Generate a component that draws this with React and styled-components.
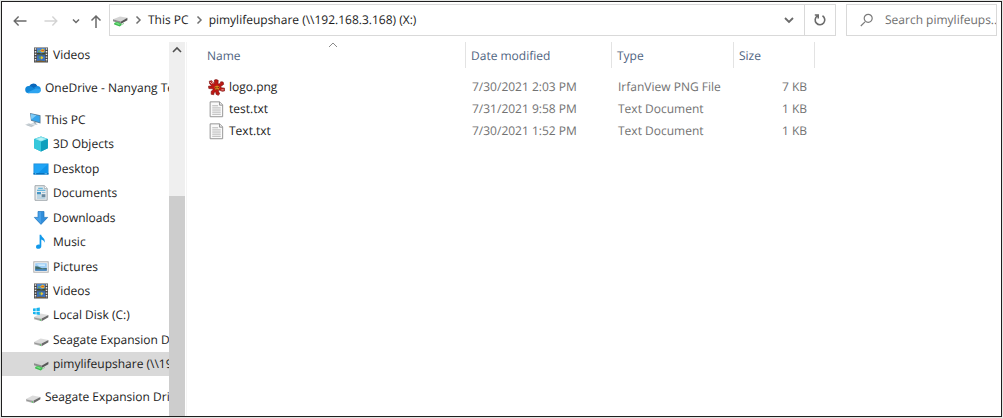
import React from "react";
import styled, { createGlobalStyle, css } from "styled-components";

const GlobalStyle = createGlobalStyle`
  *, *::before, *::after { box-sizing: border-box; }
  html { background: #e4e6e4; }
  body {
    margin: 0;
    padding: 1px;
    font-family: "Open Sans", "Noto Sans", sans-serif;
    font-size: 12px;
    line-height: 16px;
    color: #1c1c1c;
    text-rendering: geometricPrecision;
  }
  button, input, table { font: inherit; color: inherit; text-rendering: inherit; }
  svg { display: block; flex: none; }
`;

const Window = styled.div`
  display: flex;
  flex-direction: column;
  min-height: calc(100vh - 2px);
  border: 1px solid #1f1f1f;
  background: #fff;
`;

const Toolbar = styled.header`
  display: flex;
  align-items: stretch;
  height: 40px;
  padding: 2px 4px 6px 0;
`;

const plainButton = css`
  display: flex;
  align-items: center;
  justify-content: center;
  padding: 0;
  border: 0;
  background: none;
  white-space: nowrap;
`;

const History = styled.div`
  display: flex;
  width: 107px;
  padding-left: 3px;
`;

const NavButton = styled.button`
  ${plainButton}
  width: ${(p) => p.$width}px;
  padding-top: 2px;
  color: ${(p) => (p.disabled ? "#d3d3d3" : "#6a6a6a")};
`;

const AddressBar = styled.nav`
  display: flex;
  flex: 1;
  min-width: 0;
  border: 1px solid #d9d9d9;
`;

const Crumbs = styled.ol`
  display: flex;
  flex: 1;
  align-items: center;
  min-width: 0;
  margin: 0;
  padding: 0 0 0 2px;
  overflow: hidden;
  list-style: none;
`;

const Crumb = styled.li`
  display: flex;
  align-items: center;
`;

const CrumbButton = styled.button`
  ${plainButton}
`;

const CrumbArrow = styled.span`
  display: flex;
  justify-content: center;
  width: 20px;
  color: #707070;
`;

const BarButton = styled.button`
  ${plainButton}
  width: 31px;
  color: #6a6a6a;
  border-left: ${(p) => (p.$divided ? "1px solid #d9d9d9" : "0")};
`;

const SearchBox = styled.label`
  display: flex;
  align-items: center;
  gap: 12px;
  width: 151px;
  margin-left: 10px;
  padding-left: 13px;
  border: 1px solid #d9d9d9;
  color: #7b7b7b;
`;

const SearchInput = styled.input`
  flex: 1;
  min-width: 0;
  padding: 0;
  border: 0;
  outline: 0;
  background: none;
  &::placeholder { color: #6f6f6f; opacity: 1; }
`;

const Body = styled.div`
  display: flex;
  flex: 1;
`;

const Sidebar = styled.nav`
  display: flex;
  flex-direction: column;
  gap: 8px;
  width: 167px;
  padding: 1px 0 7px;
  overflow: hidden;
`;

const Group = styled.ul`
  display: flex;
  flex-direction: column;
  flex: ${(p) => p.$rows} 0 auto;
  margin: 0;
  padding: 0;
  list-style: none;
`;

const TreeItem = styled.li`
  display: flex;
  flex: 1 0 24px;
`;

const TreeLink = styled.a`
  display: flex;
  flex: 1;
  align-items: center;
  gap: 4px;
  min-width: 0;
  padding-left: ${(p) => (p.$nested ? 31 : 23)}px;
  overflow: hidden;
  background: ${(p) => (p.$selected ? "#d9d9d9" : "none")};
  color: inherit;
  text-decoration: none;
  white-space: nowrap;
`;

const ScrollTrack = styled.div`
  display: flex;
  flex-direction: column;
  width: 16px;
  background: #efefef;
`;

const ScrollButton = styled.button`
  ${plainButton}
  height: 16px;
  color: #505050;
`;

const ScrollThumb = styled.div`
  flex: 1;
  margin-top: 138px;
  background: #cdcdcd;
`;

const Main = styled.main`
  flex: 1;
  min-width: 0;
  margin-left: 1px;
  border-left: 1px solid #f4f4f4;
`;

const FileTable = styled.table`
  width: 100%;
  table-layout: fixed;
  border-collapse: separate;
  border-spacing: 0;
`;

const Column = styled.col`
  width: ${(p) => (p.$width ? `${p.$width}px` : "auto")};
`;

const HeadCell = styled.th`
  height: 26px;
  padding: 0 0 0 ${(p) => (p.$first ? 20 : 5)}px;
  border-right: ${(p) => (p.$last ? "0" : "1px solid #e3e3e3")};
  font-weight: 400;
  text-align: left;
`;

const SortButton = styled.button`
  ${plainButton}
  position: relative;
  justify-content: flex-start;
  width: 100%;
  height: 26px;
  padding-top: 2px;
  color: #4f647f;
`;

const SortMark = styled.span`
  position: absolute;
  top: 0;
  left: 121px;
  color: #8a8a8a;
`;

const Cell = styled.td`
  height: 22px;
  padding: 0 ${(p) => (p.$right ? 8 : 0)}px 0 6px;
  color: #727272;
  text-align: ${(p) => (p.$right ? "right" : "left")};
  white-space: nowrap;
`;

const NameCell = styled(Cell)`
  padding-left: 21px;
  color: #1c1c1c;
`;

const Rows = styled.tbody`
  tr:first-child > td {
    height: 30px;
    padding-top: 8px;
  }
`;

const FileName = styled.span`
  display: flex;
  align-items: center;
  gap: 4px;
  height: 22px;
`;

const Line = ({ d, w = 16, h = 16, sw = 1.5 }) => (
  <svg width={w} height={h} viewBox={`0 0 ${w} ${h}`} fill="none" stroke="currentColor" strokeWidth={sw} aria-hidden="true">
    <path d={d} />
  </svg>
);

const Icon = ({ children, size = 16 }) => (
  <svg width={size} height={size} viewBox="0 0 16 16" aria-hidden="true">{children}</svg>
);

const DriveShape = () => (
  <>
    <path d="M1 10 7.6 6.6 15.4 7.9 8.6 11.6Z" fill="#dcdcdc" />
    <path d="M1 10 8.6 11.6V14.2L1 12.2Z" fill="#b4b4b4" />
    <path d="M8.6 11.6 15.4 7.9V10.3L8.6 14.2Z" fill="#6a6a6a" />
    <path d="M2 11.1 7.8 12.4V13L2 11.7Z" fill="#8d8d8d" />
    <circle cx="7.4" cy="13" r="0.7" fill="#4fd05b" />
  </>
);

const DriveIcon = () => (
  <Icon>
    <DriveShape />
  </Icon>
);

const NetDriveIcon = () => (
  <Icon>
    <path d="M1 7.3 8 4.4 15.4 5.8 9 9.4Z" fill="#d4d4d4" />
    <path d="M1 7.3 9 9.4V11.8L1 9.2Z" fill="#8d8d8d" />
    <path d="M9 9.4 15.4 5.8V8.3L9 11.8Z" fill="#565656" />
    <path d="M2.2 11 5 9.8 9.6 11.8V13L7.8 14.4 2.2 12.4Z" fill="#3dbb4f" />
    <path d="M3 11.1 5 10.5 8.2 11.9 7 12.9Z" fill="#79e084" />
    <path d="M9.6 12.6 12 11.4" stroke="#8fcf96" />
  </Icon>
);

const LocalDiskIcon = () => (
  <Icon>
    <DriveShape />
    <g fill="#18b4ee">
      <path d="M0 1.6 2.7 1.2V4H0Z" />
      <path d="M3.4 1.1 6.8.6V4H3.4Z" />
      <path d="M0 4.7H2.7V7.5L0 7.1Z" />
      <path d="M3.4 4.7H6.8V8.1L3.4 7.6Z" />
    </g>
  </Icon>
);

const VideosIcon = () => (
  <Icon>
    <rect x="1" y="0.5" width="14" height="15" fill="#4a4a4a" />
    <path d="M2.5 1.3V15M13.5 1.3V15" stroke="#ececec" strokeWidth="1.5" strokeDasharray="1.4 1.3" />
    <rect x="4" y="1" width="8" height="6.6" fill="#4b84cf" />
    <rect x="4" y="8.3" width="8" height="6.7" fill="#3a70bd" />
    <path d="M4 5.9 6 5.4 8 6.4 12 5.6V7.6H4Z" fill="#3c4a25" />
    <path d="M7 3.4 9.7 1.6 11.7 3 11 5.3 8.5 5.2Z" fill="#e8b72d" />
    <path d="M8 3.5 10.5 2.9 11.2 4H8.2Z" fill="#d34b28" />
    <path d="M5 3.5H7V4.8H5Z" fill="#79b64d" />
    <path d="M5.8 9.4H8.8V11.5H5.8Z" fill="#54a154" />
    <path d="M8.5 9 10.5 10.6 8.6 12.6 7.5 11Z" fill="#e6c33b" />
    <path d="M4 13.9 7.5 13.4 12 14.2V15H4Z" fill="#775b2c" />
  </Icon>
);

const CloudIcon = () => (
  <Icon>
    <path d="M4.3 6.1A4.5 4.5 0 0 1 12.4 6L11 9.6 4 9Z" fill="#0b67ba" />
    <path d="M3.7 13.2A3.6 3.6 0 0 1 3.9 6 4 4 0 0 1 6.4 6.6L11.2 9.4 4 13.2Z" fill="#1187d8" />
    <path d="M8.7 8.1 10.3 6.9A3.7 3.7 0 0 1 12.4 6 3.7 3.7 0 0 1 15.8 9L11.2 9.7Z" fill="#188ee0" />
    <path d="M2 12.7 10.9 8.6 15.7 9.1A3 3 0 0 1 13 13.2H3.7Z" fill="#2da4f0" />
  </Icon>
);

const ComputerIcon = () => (
  <Icon>
    <path d="M5 1 15.5 3.3V11.4L6 8.8Z" fill="#5b7f99" />
    <path d="M5.7 1.9 14.7 3.9V10.3L6.5 8.1Z" fill="#36a5ec" />
    <path d="M5.7 1.9 11.5 3.2 6.4 7.4Z" fill="#81cdf8" />
    <path d="M9 9.9 11.4 10.5 11 11.9 8.4 11.2Z" fill="#8fa1ad" />
    <path d="M7 11.2 13 11.9 11.4 13 6 12Z" fill="#c3ced5" />
    <path d="M0 12.8 4 11.2 10 13.3 6.6 15.2Z" fill="#cfd6db" />
    <path d="M1.8 12.8 6.8 14.5M3.4 12.1 8.4 13.8" stroke="#aab4bb" strokeWidth=".5" />
  </Icon>
);

const CubeIcon = () => (
  <Icon>
    <path d="M8 .5 14.8 3V12.3L8 15.5 1.2 12.3V3Z" fill="#12a6c2" />
    <path d="M8 .5 14.8 3 8 5.7 1.2 3Z" fill="#83e3ed" />
    <path d="M1.2 3 8 5.7V15.5L1.2 12.3Z" fill="#36c8dc" />
    <path d="M8 5.7 14.8 3V12.3L8 15.5Z" fill="#0e9fbd" />
    <path d="M4 3.1 8 1.7 12 3.1 8 4.7Z" fill="#baf3f6" />
  </Icon>
);

const DesktopIcon = () => (
  <Icon>
    <rect x=".5" y="2.5" width="15" height="11" fill="#1686d2" />
    <rect x="1.2" y="3.2" width="13.6" height="8.8" fill="#20a5f6" />
    <path d="M14.8 3.2V12H5.2Z" fill="#0f94e9" />
    <path d="M.5 12H15.5V13.5H.5Z" fill="#0872bc" />
    <path d="M2 12.8H3.2M11.6 12.8H14" stroke="#8cd5ff" strokeWidth=".8" />
  </Icon>
);

const DocumentsIcon = () => (
  <Icon>
    <path d="M2 .7H11.3L14.2 3.4V15.3H2Z" fill="#e6eaec" stroke="#a2a9ae" />
    <path d="M11.3.7V3.6H14.2" fill="#fff" stroke="#a2a9ae" strokeWidth=".8" />
    <path d="M5.2 3.2H9.8M4 5.2H12.4" stroke="#3fa6d8" strokeWidth="1.1" />
    <rect x="4" y="7" width="4" height="2.4" fill="#4596c6" />
    <rect x="8.6" y="9.2" width="3.8" height="3" fill="#6a8aa0" />
    <path d="M9 7.5H12.4M4 11H7.6M4 13H12.4" stroke="#8dbcd8" strokeWidth=".9" />
  </Icon>
);

const DownloadIcon = () => (
  <Icon>
    <path d="M5 1.5H11V7.4H14.7L8 14.4 1.3 7.4H5Z" fill="#318edb" stroke="#2176bb" strokeWidth=".7" />
    <path d="M5.5 2H8V13.6L2.3 7.9H5.5Z" fill="#46a0e8" />
  </Icon>
);

const MusicIcon = () => (
  <Icon>
    <path d="M6.6.8H8.2C8.4 3.6 12.6 4 11.7 8.8 11.1 6.5 9.8 6 8.3 5.4V12.2C8.3 15.3 3 15.8 3 12.9 3 10.7 5.4 10.1 6.6 10.7Z" fill="#1299ea" />
  </Icon>
);

const PicturesIcon = () => (
  <Icon>
    <rect x=".8" y="2.8" width="14.4" height="10.4" fill="#fafafa" stroke="#b0b0b0" />
    <rect x="2.2" y="4.2" width="11.6" height="7.6" fill="#9ccdf5" />
    <path d="M4 5.4H12V6.8H6Z" fill="#e0f5ff" />
    <path d="M2.2 7.2 5 7.4 9 9.2 13.8 9V10.4H2.2Z" fill="#416b68" />
    <path d="M2.2 10 9 10.4 13.8 9.9V11.8H2.2Z" fill="#3a7ab5" />
  </Icon>
);

const IrfanIcon = () => (
  <Icon size={17}>
    <path d="M6 4.8 6 1 7.6 .5 9.6 1.2 9.4 4.6 11.4 4.4 12 2.6 14.2 2.8 14.8 5 12 7 12.4 8.2 15.6 8.6 15.6 11.2 13.4 11.6 10.6 10.4 9.8 11.4 11 14 9.6 15.4 7.6 14.4 7.2 12 5.8 12.6 5.4 14.8 3 14.4 3 11.6 4.8 10 4.4 9.2 .8 9 .4 6.8 3.6 6.4 1.6 4.6 1.2 2 3.6 1.6Z" fill="#bd1814" stroke="#7d1512" strokeWidth=".6" strokeLinejoin="round" />
    <path d="M6 7.2 8.6 6.2 11 7.6 10 10 7 10.2Z" fill="#d8891c" />
    <path d="M6.8 7.8H8V8.7H6.8ZM9.1 7.5H10.2V8.4H9.1ZM7.4 9.3H9.6V9.8H7.4Z" fill="#5d2414" />
    <path d="M2 2.8 3.6 4.6M3.8 2.2 4.8 4.4M12.6 10.2H14.8" stroke="#e2b5b1" strokeWidth=".9" />
  </Icon>
);

const TextIcon = () => (
  <Icon size={17}>
    <path d="M2 .8H11L13.8 3.6V14.8H2Z" fill="#fafafa" stroke="#929292" strokeWidth=".9" />
    <path d="M10.8.8V3.9H13.8" fill="#e7e7e7" stroke="#929292" strokeWidth=".9" />
    <path d="M4 4.5H9.5M4 6.5H12M4 8.5H12M4 10.5H12M4 12.5H12" stroke="#aaa" strokeWidth=".8" />
  </Icon>
);

const GROUPS = [
  [{ label: "Videos", icon: VideosIcon, nested: true }],
  [{ label: "OneDrive - Nanyang Technological University", icon: CloudIcon }],
  [
    { label: "This PC", icon: ComputerIcon },
    { label: "3D Objects", icon: CubeIcon, nested: true },
    { label: "Desktop", icon: DesktopIcon, nested: true },
    { label: "Documents", icon: DocumentsIcon, nested: true },
    { label: "Downloads", icon: DownloadIcon, nested: true },
    { label: "Music", icon: MusicIcon, nested: true },
    { label: "Pictures", icon: PicturesIcon, nested: true },
    { label: "Videos", icon: VideosIcon, nested: true },
    { label: "Local Disk (C:)", icon: LocalDiskIcon, nested: true },
    { label: "Seagate Expansion Drive", icon: DriveIcon, nested: true },
    { label: "pimylifeupshare (\\\\192.168.3.168)", icon: NetDriveIcon, nested: true, selected: true },
  ],
  [{ label: "Seagate Expansion Drive", icon: DriveIcon }],
];

const FILES = [
  { name: "logo.png", icon: IrfanIcon, date: "7/30/2021 2:03 PM", type: "IrfanView PNG File", size: "7 KB" },
  { name: "test.txt", icon: TextIcon, date: "7/31/2021 9:58 PM", type: "Text Document", size: "1 KB" },
  { name: "Text.txt", icon: TextIcon, date: "7/30/2021 1:52 PM", type: "Text Document", size: "1 KB" },
];

export default function App() {
  return (
    <>
      <GlobalStyle />
      <Window>
        <Toolbar>
          <History>
            <NavButton $width={29} aria-label="Back"><Line d="M14.5 8H2M6.6 3.6 2.2 8 6.6 12.4" sw={1.4} /></NavButton>
            <NavButton $width={34} disabled aria-label="Forward"><Line d="M1.5 8H14M9.4 3.6 13.8 8 9.4 12.4" sw={1.4} /></NavButton>
            <NavButton $width={15} aria-label="Recent locations"><Line w={8} h={8} d="M1 2.5 4 5.5 7 2.5" /></NavButton>
            <NavButton $width={26} aria-label="Up"><Line d="M8 15V3M3.5 7.5 8 3 12.5 7.5" /></NavButton>
          </History>
          <AddressBar aria-label="Address">
            <Crumbs>
              <Crumb><NetDriveIcon /></Crumb>
              <Crumb>
                <CrumbArrow><Line w={8} h={8} d="M2.5 .5 6 4 2.5 7.5" /></CrumbArrow>
                <CrumbButton>This PC</CrumbButton>
              </Crumb>
              <Crumb>
                <CrumbArrow><Line w={8} h={8} d="M2.5 .5 6 4 2.5 7.5" /></CrumbArrow>
                <CrumbButton>{"pimylifeupshare (\\\\192.168.3.168) (X:)"}</CrumbButton>
              </Crumb>
            </Crumbs>
            <BarButton aria-label="Previous locations"><Line w={10} h={8} d="M1 2 5 6 9 2" sw={1.8} /></BarButton>
            <BarButton $divided aria-label="Refresh">
              <Line w={14} h={14} d="M9.5 2.8A4.8 4.8 0 1 1 4.3 2.9M1.8 2H5.2V5.6" sw={1.6} />
            </BarButton>
          </AddressBar>
          <SearchBox>
            <Line w={13} h={14} d="M5 8.8.8 13M4.2 5.3A4 4 0 1 0 12.2 5.3 4 4 0 1 0 4.2 5.3" sw={1.2} />
            <SearchInput type="text" aria-label="Search" placeholder="Search pimylifeups..." />
          </SearchBox>
        </Toolbar>
        <Body>
          <Sidebar aria-label="Folders">
            {GROUPS.map((items, g) => (
              <Group key={g} $rows={items.length}>
                {items.map(({ label, icon: Glyph, nested, selected }) => (
                  <TreeItem key={label}>
                    <TreeLink href="#" $nested={nested} $selected={selected}>
                      <Glyph />
                      {label}
                    </TreeLink>
                  </TreeItem>
                ))}
              </Group>
            ))}
          </Sidebar>
          <ScrollTrack>
            <ScrollButton aria-label="Scroll up"><Line w={10} h={8} d="M1 6 5 2 9 6" sw={1.6} /></ScrollButton>
            <ScrollThumb />
          </ScrollTrack>
          <Main>
            <FileTable>
              <colgroup>
                <Column $width={279} />
                <Column $width={146} />
                <Column $width={122} />
                <Column $width={81} />
                <Column />
              </colgroup>
              <thead>
                <tr>
                  <HeadCell $first>
                    <SortButton>
                      Name
                      <SortMark><Line w={10} h={6} d="M1 5 5 1 9 5" sw={1} /></SortMark>
                    </SortButton>
                  </HeadCell>
                  <HeadCell><SortButton>Date modified</SortButton></HeadCell>
                  <HeadCell><SortButton>Type</SortButton></HeadCell>
                  <HeadCell><SortButton>Size</SortButton></HeadCell>
                  <HeadCell as="td" $last />
                </tr>
              </thead>
              <Rows>
                {FILES.map(({ name, icon: Glyph, date, type, size }) => (
                  <tr key={name}>
                    <NameCell><FileName><Glyph />{name}</FileName></NameCell>
                    <Cell>{date}</Cell>
                    <Cell>{type}</Cell>
                    <Cell $right>{size}</Cell>
                  </tr>
                ))}
              </Rows>
            </FileTable>
          </Main>
        </Body>
      </Window>
    </>
  );
}
